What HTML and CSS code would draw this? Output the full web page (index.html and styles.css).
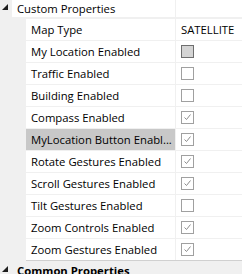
FILE: index.html
```html
<!DOCTYPE html>
<html lang="en">
<head>
    <meta charset="UTF-8">
    <title>Properties</title>
    <link rel="stylesheet" href="styles.css">
</head>
<body>

    <div class="grid">
        <div class="cat open">
            <div class="toggle"><svg width="12" height="17" viewBox="0 0 12 17"><polygon points="8,4 8,10 2,10" fill="#1e1e1e"/></svg></div>
            <div class="name">Custom Properties</div>
            <div class="value"></div>
        </div>

        <div class="row"><div class="name">Map Type</div><div class="value">SATELLITE</div></div>
        <div class="row"><div class="name">My Location Enabled</div><div class="value"><span class="check disabled"></span></div></div>
        <div class="row"><div class="name">Traffic Enabled</div><div class="value"><span class="check"></span></div></div>
        <div class="row"><div class="name">Building Enabled</div><div class="value"><span class="check"></span></div></div>
        <div class="row"><div class="name">Compass Enabled</div><div class="value"><span class="check"><svg viewBox="0 0 11 11"><path d="M2.5 5.5 L4.5 7.5 L8.5 2.5" /></svg></span></div></div>
        <div class="row selected"><div class="name">MyLocation Button Enabl...</div><div class="value"><span class="check"><svg viewBox="0 0 11 11"><path d="M2.5 5.5 L4.5 7.5 L8.5 2.5" /></svg></span></div></div>
        <div class="row"><div class="name">Rotate Gestures Enabled</div><div class="value"><span class="check"><svg viewBox="0 0 11 11"><path d="M2.5 5.5 L4.5 7.5 L8.5 2.5" /></svg></span></div></div>
        <div class="row"><div class="name">Scroll Gestures Enabled</div><div class="value"><span class="check"><svg viewBox="0 0 11 11"><path d="M2.5 5.5 L4.5 7.5 L8.5 2.5" /></svg></span></div></div>
        <div class="row"><div class="name">Tilt Gestures Enabled</div><div class="value"><span class="check"></span></div></div>
        <div class="row"><div class="name">Zoom Controls Enabled</div><div class="value"><span class="check"><svg viewBox="0 0 11 11"><path d="M2.5 5.5 L4.5 7.5 L8.5 2.5" /></svg></span></div></div>
        <div class="row last"><div class="name">Zoom Gestures Enabled</div><div class="value"><span class="check"><svg viewBox="0 0 11 11"><path d="M2.5 5.5 L4.5 7.5 L8.5 2.5" /></svg></span></div></div>

        <div class="cat">
            <div class="toggle"><svg width="12" height="17" viewBox="0 0 12 17"><polygon points="8,4 8,10 2,10" fill="#1e1e1e"/></svg></div>
            <div class="name">Common Properties</div>
        </div>
    </div>

</body>
</html>
```

FILE: styles.css
```css
body { margin: 0; background: #f0f0f0; font-family: 'Open Sans', sans-serif; font-size: 11.3px; color: #000; width: 242px; height: 274px; overflow: hidden; }
.cat { display: flex; height: 17px; border-bottom: 1px solid #f0f0f0; line-height: 17px; }
.cat .toggle { width: 12px; }
.cat .toggle svg { display: block; }
.cat .name { width: 158px; padding-left: 5px; }
.cat.open .name { background: white; }
.cat.open .value { margin-left: 1px; flex: 1; background: white; }
.cat:last-child { border-bottom: none; margin-top: 1px; }
.cat:last-child .name { font-weight: bold; width: auto; }
.row { display: flex; margin-left: 26px; height: 21px; border-top: 1px solid #f0f0f0; line-height: 21px; }
.row.last { border-bottom: 1px solid #d0d0d0; }
.row .name { width: 144px; padding-left: 5px; background: white; white-space: nowrap; overflow: hidden; }
.row .value { margin-left: 1px; flex: 1; padding-left: 5px; background: white; }
.row.selected .name { background: #c8c8c8; }
.check { display: block; width: 13px; height: 13px; box-sizing: border-box; margin-top: 4px; border: 1px solid #a0a0a0; background: white; }
.check svg { display: block; width: 11px; height: 11px; fill: none; stroke: #8c8c8c; stroke-width: 1; }
.check.disabled { background: #d4d4d4; border-color: #6e6e6e; }
```
